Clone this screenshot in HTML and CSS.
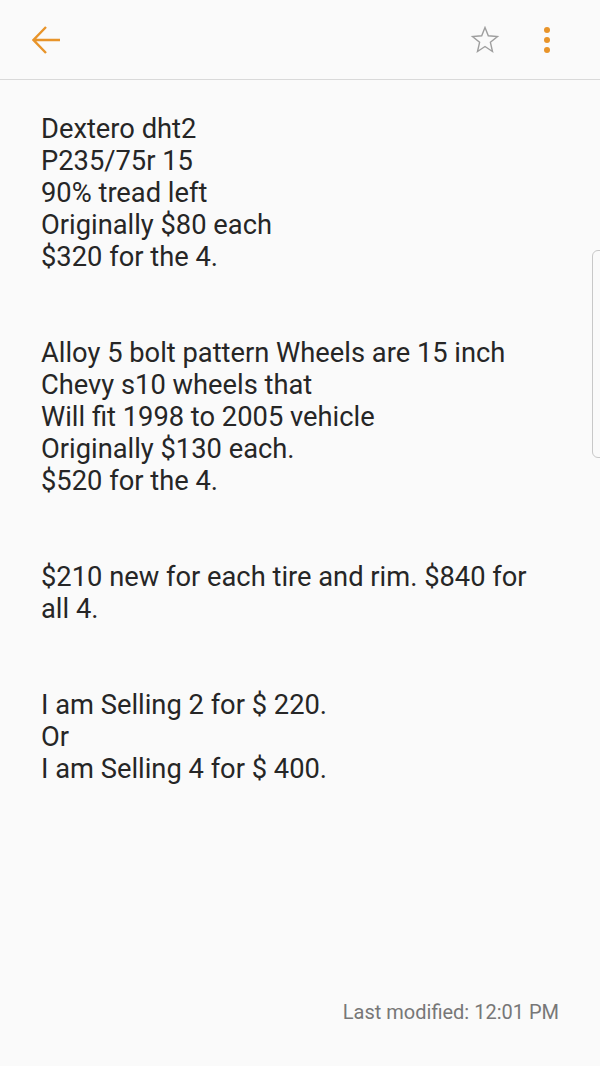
FILE: index.html
```html
<!DOCTYPE html>
<html lang="en">
  <head>
    <meta charset="UTF-8" />
    <meta name="viewport" content="width=device-width, initial-scale=1.0" />
    <title>Memo</title>
    <link rel="stylesheet" href="styles.css">
  </head>
  <body>
    <header class="toolbar">
      <!-- back arrow -->
      <button class="icon-button back-button">
        <svg width="28" height="28" viewBox="0 0 28 28">
          <path d="M14 1 L1.5 14 L14 27 M1.5 14 H28" fill="none" stroke="#e8942a" stroke-width="2.4" />
        </svg>
      </button>
      <div class="toolbar-actions">
        <button class="icon-button">
          <svg width="30" height="28" viewBox="0 0 30 28">
            <path d="M15 1.5 L18.3 9.8 L27.5 10.5 L20.4 16.3 L22.5 25.5 L15 20.5 L7.5 25.5 L9.6 16.3 L2.5 10.5 L11.7 9.8 Z" fill="none" stroke="#9e9e9e" stroke-width="1.4" stroke-linejoin="miter" />
          </svg>
        </button>
        <button class="icon-button more-button">
          <span class="dot"></span>
          <span class="dot"></span>
          <span class="dot"></span>
        </button>
      </div>
    </header>

    <main class="note">
      <p>Dextero dht2<br />P235/75r 15<br />90% tread left<br />Originally $80 each<br />$320 for the 4.</p>
      <p>Alloy 5 bolt pattern Wheels are 15 inch<br />Chevy s10 wheels that<br />Will fit 1998 to 2005 vehicle<br />Originally $130 each.<br />$520 for the 4.</p>
      <p>$210 new for each tire and rim. $840 for all 4.</p>
      <p>I am Selling 2 for $ 220.<br />Or<br />I am Selling 4 for $ 400.</p>
    </main>

    <footer class="note-footer">
      <span>Last modified: 12:01 PM</span>
    </footer>

    <!-- edge panel handle -->
    <div class="edge-handle"></div>
  </body>
</html>
```

FILE: styles.css
```css
body {
  margin: 0;
  height: 1066px;
  background-color: #fafafa;
  font-family: Roboto, "Noto Sans", sans-serif;
  color: #262626;
  display: flex;
  flex-direction: column;
  overflow: hidden;
}

.toolbar {
  height: 80px;
  border-bottom: 1px solid #d9d9d9;
  display: flex;
  align-items: center;
  justify-content: space-between;
  padding: 0 50px 0 32px;
  box-sizing: border-box;
}

.toolbar-actions {
  display: flex;
  align-items: center;
  gap: 44px;
}

.icon-button {
  background: none;
  border: none;
  padding: 0;
  display: flex;
  align-items: center;
  justify-content: center;
  cursor: pointer;
}

.more-button {
  flex-direction: column;
  gap: 4px;
  width: 6px;
}

.dot {
  width: 6px;
  height: 6px;
  border-radius: 50%;
  background-color: #e8942a;
}

.note {
  padding: 33px 45px 0 41px;
  font-size: 27.3px;
  line-height: 32px;
}

.note p {
  margin: 0 0 64px 0;
}

.note-footer {
  margin-top: auto;
  padding: 0 41px 42px 0;
  text-align: right;
  font-size: 20px;
  line-height: 24px;
  color: #777;
}

.edge-handle {
  position: absolute;
  top: 250px;
  left: 592px;
  width: 14px;
  height: 208px;
  border: 1px solid #c8c8c8;
  border-radius: 6px;
  box-sizing: border-box;
}
```
